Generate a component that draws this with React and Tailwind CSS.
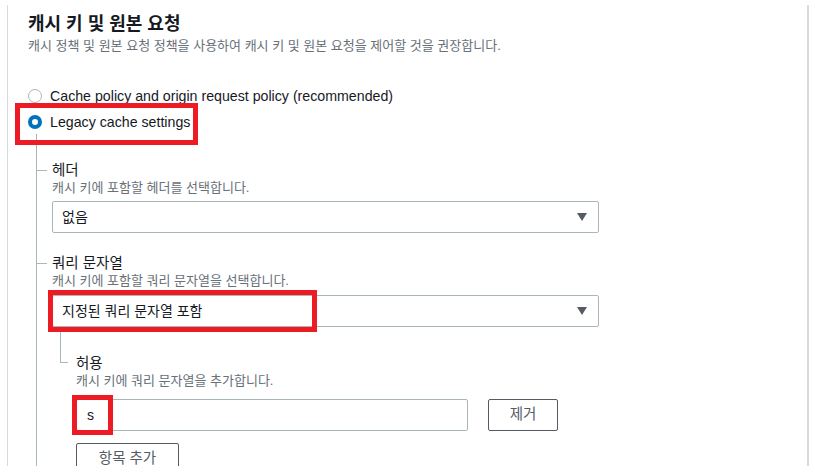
const FONT = { fontFamily: '"Liberation Sans", "Noto Sans CJK KR", sans-serif' };

function Radio({ checked, label }) {
  return (
    <div className="flex items-center h-[20px]">
      {checked ? (
        <span className="w-[14px] h-[14px] rounded-full border-[4px] border-[#0073bb] bg-white" />
      ) : (
        <span className="w-[14px] h-[14px] rounded-full border border-[#aab7b8] bg-white" />
      )}
      <span className="ml-[8px] text-[14.2px] leading-[20px] text-[#16191f]">{label}</span>
    </div>
  );
}

function Caret() {
  return (
    <svg width="10" height="8" viewBox="0 0 10 8" className="shrink-0">
      <polygon points="0,0 10,0 5,8" fill="#545b64" />
    </svg>
  );
}

function Select({ value }) {
  return (
    <div className="flex items-center justify-between w-[547px] h-[32px] pl-[9px] pr-[11px] border border-[#aab7b8] rounded-[2px] bg-white">
      <span className="text-[14px] text-[#16191f]">{value}</span>
      <Caret />
    </div>
  );
}

function Field({ label, desc, children }) {
  return (
    <div className="flex">
      <span className="w-[10px] h-px bg-[#aab7b8] mt-[10px] shrink-0" />
      <div className="ml-[5px] flex flex-col">
        <span className="text-[14.5px] leading-[20px] text-[#16191f]">{label}</span>
        <span className="text-[13px] leading-[16px] text-[#687078]">{desc}</span>
        {children}
      </div>
    </div>
  );
}

export default function App() {
  return (
    <div className="relative w-[815px] h-[474px] bg-white overflow-hidden" style={FONT}>
      <div className="ml-[7px] mt-[5px] w-[802px] h-[461px] overflow-hidden border-l border-r-2 border-[#d5dbdb] pl-[20px] pt-[7px]">
        <h2 className="text-[18px] leading-[24px] font-bold text-[#16191f]">캐시 키 및 원본 요청</h2>
        <p className="mt-[2px] text-[13px] leading-[16px] text-[#687078]">
          캐시 정책 및 원본 요청 정책을 사용하여 캐시 키 및 원본 요청을 제어할 것을 권장합니다.
        </p>

        <div className="mt-[32px] flex flex-col gap-[6px]">
          <Radio label="Cache policy and origin request policy (recommended)" />
          <Radio checked label="Legacy cache settings" />
        </div>

        {/* tree */}
        <div className="mt-[2px] ml-[8px] border-l border-[#aab7b8] pt-[26px] h-[400px]">
          <Field label="헤더" desc="캐시 키에 포함할 헤더를 선택합니다.">
            <div className="mt-[5px]">
              <Select value="없음" />
            </div>
          </Field>

          <div className="mt-[20px]">
            <Field label="쿼리 문자열" desc="캐시 키에 포함할 쿼리 문자열을 선택합니다.">
              <div className="mt-[6px]">
                <Select value="지정된 쿼리 문자열 포함" />
              </div>
              <div className="flex">
                <div className="ml-[8px] w-[8px] h-[36px] border-l border-b border-[#aab7b8] shrink-0" />
                <div className="ml-[8px] pt-[26px] flex flex-col">
                  <span className="text-[14.5px] leading-[20px] text-[#16191f]">허용</span>
                  <span className="text-[13px] leading-[16px] text-[#687078]">캐시 키에 쿼리 문자열을 추가합니다.</span>
                  <div className="mt-[10px] flex items-center">
                    <div className="w-[392px] h-[32px] pl-[10px] flex items-center border border-[#aab7b8] rounded-[2px] text-[14px] text-[#16191f]">
                      s
                    </div>
                    <button className="ml-[20px] w-[70px] h-[32px] border border-[#545b64] rounded-[2px] text-[14.5px] text-[#545b64] bg-white">
                      제거
                    </button>
                  </div>
                  <button className="mt-[12px] w-[103px] h-[32px] border border-[#545b64] rounded-[2px] text-[14.5px] text-[#545b64] bg-white">
                    항목 추가
                  </button>
                </div>
              </div>
            </Field>
          </div>
        </div>
      </div>

      {/* annotation boxes */}
      <div className="absolute left-[15px] top-[103px] w-[183px] h-[42px] border-[5px] border-[#ed1c24]" />
      <div className="absolute left-[48px] top-[290px] w-[269px] h-[42px] border-[5px] border-[#ed1c24]" />
      <div className="absolute left-[72px] top-[395px] w-[41px] h-[40px] border-[5px] border-[#ed1c24]" />
    </div>
  );
}
